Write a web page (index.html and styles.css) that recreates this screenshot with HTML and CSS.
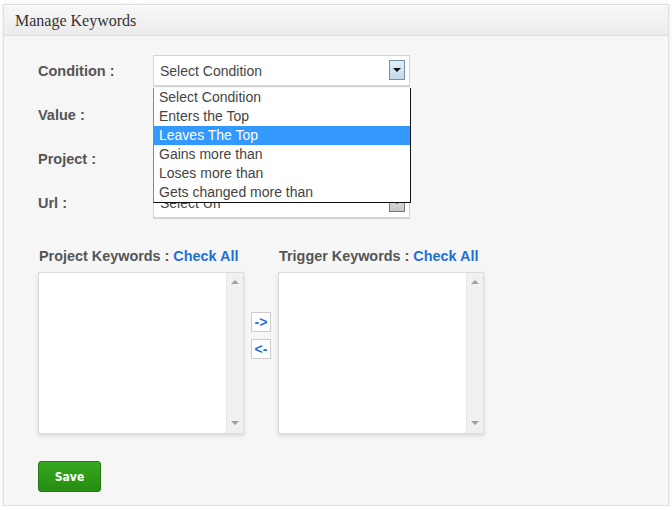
FILE: index.html
```html
<!DOCTYPE html>
<html lang="en">
<head>
    <meta charset="UTF-8">
    <title>Manage Keywords</title>
    <link rel="stylesheet" href="styles.css">
</head>
<body>

<div class="panel">
    <div class="panel-head">Manage Keywords</div>
    <div class="panel-body">
        <div class="fields">
            <div class="row">
                <label>Condition :</label>
                <div class="select">
                    <span class="select-text">Select Condition</span>
                    <span class="arrow active"></span>
                </div>
            </div>
            <div class="row">
                <label>Value :</label>
                <div class="select"><span class="select-text"></span></div>
            </div>
            <div class="row">
                <label>Project :</label>
                <div class="select"><span class="select-text"></span></div>
            </div>
            <div class="row">
                <label>Url :</label>
                <div class="select">
                    <span class="select-text">Select Url</span>
                    <span class="arrow"></span>
                </div>
            </div>

            <!-- open dropdown of the condition select -->
            <ul class="dropdown">
                <li>Select Condition</li>
                <li>Enters the Top</li>
                <li class="selected">Leaves The Top</li>
                <li>Gains more than</li>
                <li>Loses more than</li>
                <li>Gets changed more than</li>
            </ul>
        </div>

        <div class="keywords">
            <div class="kw-col">
                <div class="kw-title">Project Keywords : <a href="#">Check All</a></div>
                <div class="listbox">
                    <div class="scroll"><span class="up"></span><span class="down"></span></div>
                </div>
            </div>
            <div class="movers">
                <button>-&gt;</button>
                <button>&lt;-</button>
            </div>
            <div class="kw-col">
                <div class="kw-title">Trigger Keywords : <a href="#">Check All</a></div>
                <div class="listbox">
                    <div class="scroll"><span class="up"></span><span class="down"></span></div>
                </div>
            </div>
        </div>

        <button class="save">Save</button>
    </div>
</div>

</body>
</html>
```

FILE: styles.css
```css
body {
    margin: 0;
    background: #fff;
    font-family: "Liberation Sans", Arial, sans-serif;
}
.panel {
    margin: 4px 0 0 3px;
    width: 664px;
    height: 500px;
    border: 1px solid #e0e0e0;
    background: #f6f6f6;
    box-shadow: 0 1px 4px rgba(0, 0, 0, 0.12);
}
.panel-head {
    height: 30px;
    line-height: 31px;
    padding-left: 11px;
    font-family: "Liberation Serif", Georgia, serif;
    font-size: 16px;
    color: #333;
    background: linear-gradient(#f8f8f8, #ebebeb);
    border-bottom: 1px solid #dedede;
}
.panel-body {
    padding: 19px 0 0 34px;
}
.fields {
    position: relative;
    display: flex;
    flex-direction: column;
    gap: 13px;
}
.row {
    display: flex;
    align-items: center;
    height: 31px;
}
.row label {
    width: 115px;
    font-size: 14.5px;
    font-weight: bold;
    color: #555;
}
.select {
    position: relative;
    width: 255px;
    height: 29px;
    border: 1px solid #d4d4d4;
    border-bottom-width: 2px;
    background: #fff;
    display: flex;
    align-items: center;
}
.select-text {
    padding-left: 6px;
    padding-top: 2px;
    font-size: 14px;
    color: #444;
}
.arrow {
    position: absolute;
    right: 4px;
    top: 4px;
    width: 14px;
    height: 18px;
    border: 1px solid #777;
    background: linear-gradient(#e6e6e6, #c8c8c8);
}
.arrow.active {
    border-color: #6f93a8;
    background: linear-gradient(#e4eef6, #c3d8ea);
}
.arrow::after {
    content: "";
    position: absolute;
    left: 3px;
    top: 7px;
    border-left: 4px solid transparent;
    border-right: 4px solid transparent;
    border-top: 4px solid #111;
}
.dropdown {
    position: absolute;
    left: 115px;
    top: 33px;
    width: 256px;
    margin: 0;
    padding: 0;
    list-style: none;
    background: #fff;
    border: 1px solid #111;
    border-left-color: #888;
    border-top: none;
}
.dropdown li {
    height: 19px;
    line-height: 19px;
    padding-left: 5px;
    font-size: 14px;
    color: #444;
}
.dropdown li.selected {
    background: #3399ff;
    color: #fff;
}
.keywords {
    display: flex;
    align-items: flex-start;
    margin-top: 30px;
}
.kw-title {
    font-size: 14.4px;
    font-weight: bold;
    color: #555;
    height: 17px;
    margin-bottom: 7px;
    margin-left: 1px;
}
.kw-title a {
    color: #1f6fdb;
    text-decoration: none;
}
.listbox {
    position: relative;
    width: 204px;
    height: 160px;
    background: #fff;
    border: 1px solid #dcdcdc;
    box-shadow: 0 2px 4px rgba(0, 0, 0, 0.12);
}
.scroll {
    position: absolute;
    right: 0;
    top: 0;
    bottom: 0;
    width: 16px;
    background: #f0f0f0;
    border-left: 1px solid #e6e6e6;
}
.scroll span {
    position: absolute;
    left: 4px;
    border-left: 4px solid transparent;
    border-right: 4px solid transparent;
}
.scroll .up {
    top: 7px;
    border-bottom: 4px solid #a0a0a0;
}
.scroll .down {
    bottom: 8px;
    border-top: 4px solid #a0a0a0;
}
.movers {
    display: flex;
    flex-direction: column;
    gap: 7px;
    margin: 64px 7px 0 7px;
}
.movers button {
    width: 20px;
    height: 20px;
    padding: 0;
    border: 1px solid #ccc;
    background: #fff;
    color: #1f6fdb;
    font-family: "Liberation Sans", Arial, sans-serif;
    font-size: 14px;
    font-weight: bold;
}
.save {
    margin-top: 27px;
    width: 63px;
    height: 31px;
    border: 1px solid #1f7a10;
    border-radius: 3px;
    background: linear-gradient(#37a81f, #268c12);
    color: #fff;
    font-family: "DejaVu Sans Condensed", "Liberation Sans", sans-serif;
    font-size: 12px;
    font-weight: bold;
    cursor: pointer;
}
```
